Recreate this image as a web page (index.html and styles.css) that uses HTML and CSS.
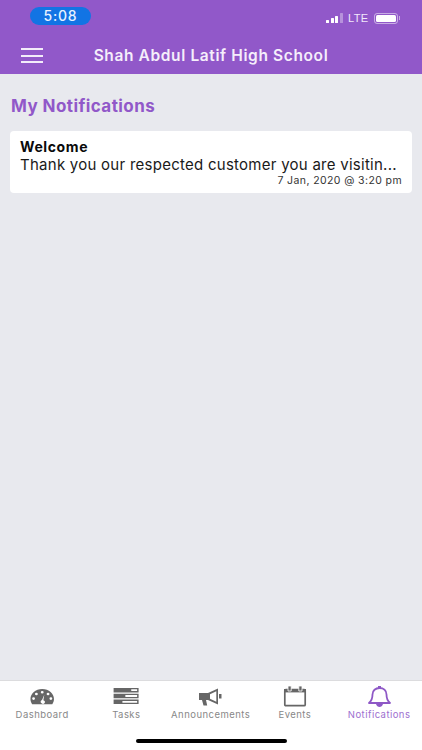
FILE: index.html
```html
<!DOCTYPE html>
<html lang="en">
<head>
<meta charset="utf-8">
<title>My Notifications</title>
<link rel="stylesheet" href="styles.css">
</head>
<body>
<div class="app">
  <header class="top">
    <div class="status">
      <span class="time">5:08</span>
      <div class="sys">
        <span class="signal"><i class="s1"></i><i class="s2"></i><i class="s3"></i><i class="s4"></i></span>
        <span class="lte">LTE</span>
        <span class="battery"><span class="fill"></span></span><span class="nub"></span>
      </div>
    </div>
    <div class="bar">
      <span class="burger"><i></i><i></i><i></i></span>
      <h1>Shah Abdul Latif High School</h1>
    </div>
  </header>
  <main class="content">
    <h2>My Notifications</h2>
    <article class="card">
      <div class="card-title">Welcome</div>
      <div class="card-body">Thank you our respected customer you are visitin...</div>
      <div class="card-date">7 Jan, 2020 @ 3:20 pm</div>
    </article>
  </main>
  <nav class="tabs">
    <div class="tab">
      <svg class="ico" width="26" height="21" viewBox="0 0 26 21"><g transform="translate(1 3) scale(.94 .87)"><path fill="#666" fill-rule="evenodd" d="M13 0C5.800 0 .5 5.400.5 11.500c0 2.400.7 4.400 1.800 6h21.400c1.100-1.600 1.800-3.600 1.800-6C25.500 5.400 20.200 0 13 0zM13 2.200a1.500 1.500 0 1 1 0 3 1.500 1.500 0 0 1 0-3zM6.800 4.200a1.500 1.500 0 1 1 0 3 1.500 1.500 0 0 1 0-3zM19.200 4.200a1.500 1.500 0 1 1 0 3 1.500 1.500 0 0 1 0-3zM3.800 9.500a1.500 1.500 0 1 1 0 3 1.500 1.500 0 0 1 0-3zM22.200 9.500a1.500 1.500 0 1 1 0 3 1.500 1.500 0 0 1 0-3zM15.200 6.500l-1 6.300a2.200 2.200 0 1 1-2.300 3.400 2.200 2.200 0 0 1 .9-3.600z"/></g></svg>
      <span>Dashboard</span>
    </div>
    <div class="tab">
      <svg class="ico" width="26" height="21" viewBox="0 0 26 21"><g transform="translate(.6 2) scale(.98 .89)"><path fill="#666" fill-rule="evenodd" d="M0 0h25.500v5H0zM18 1.500v2h6v-2zM0 6.500h25.500v5H0zM12 8v2h12V8zM0 13h25.500v5H0zM9 14.500v2h15v-2z"/></g></svg>
      <span>Tasks</span>
    </div>
    <div class="tab">
      <svg class="ico" width="26" height="21" viewBox="0 0 26 21"><g transform="translate(0 2)"><path fill="#666" d="M1 5h9v7H8l1.200 5.500H5.500L4 12H1z"/><path fill="#666" d="M10 5 20 .5v16L10 12z"/><path fill="#fff" d="M12 6.300 18.300 3.300v10.400L12 10.700z"/><path fill="#666" d="M21 6h2.500v4.500H21z"/></g></svg>
      <span>Announcements</span>
    </div>
    <div class="tab">
      <svg class="ico" width="24" height="21" viewBox="0 0 24 21"><rect x="1.800" y="3.500" width="20.400" height="16.200" rx="1" fill="none" stroke="#666" stroke-width="1.700"/><path fill="#666" d="M1 3h22v3.400H1z"/><path fill="#666" stroke="#fff" stroke-width=".8" d="M5 0h3.200v5H5zM15.800 0H19v5h-3.200z"/></svg>
      <span>Events</span>
    </div>
    <div class="tab active">
      <svg class="ico" width="23" height="21" viewBox="0 0 23 21"><path fill="none" stroke="#8e58c6" stroke-width="1.800" stroke-linejoin="round" d="M1 17c3-2.500 3.500-5 3.500-8.500C4.500 4.500 7.500 2 11.500 2s7 2.500 7 6.500c0 3.500.5 6 3.500 8.500z"/><path fill="#8e58c6" d="M10 0h3v2.500h-3zM8 18h7c-.5 2-2 3-3.500 3S8.500 20 8 18z"/></svg>
      <span>Notifications</span>
    </div>
  </nav>
  <div class="home"><span></span></div>
</div>
</body>
</html>
```
FILE: styles.css
```css
* { box-sizing: border-box; margin: 0; padding: 0; }
html, body { width: 422px; height: 750px; overflow: hidden; }
body { font-family: "Liberation Sans", Arial, sans-serif; background: #e8e9ee; }
.app { width: 422px; height: 750px; display: flex; flex-direction: column; }

.top { height: 74px; background: #9158c9; flex: none; color: #fff; }
.status { height: 36px; padding: 7px 22px 0 30px; display: flex; align-items: flex-start; justify-content: space-between; }
.time { width: 61px; height: 18px; border-radius: 9px; background: #1274e4; color: #e8f2ff; font-size: 14px; line-height: 18px; text-align: center; font-family: "Inter", sans-serif; font-weight: 500; letter-spacing: .8px; }
.sys { display: flex; align-items: center; height: 18px; margin-top: 2px; }
.signal { display: flex; align-items: flex-end; gap: 1.500px; height: 10px; margin-right: 5px; margin-left: -3px; }
.signal i { display: block; width: 3px; background: #fff; border-radius: .5px; }
.signal .s1 { height: 3px; } .signal .s2 { height: 5px; } .signal .s3 { height: 7.500px; }
.signal .s4 { height: 10px; background: rgba(255,255,255,.35); }
.lte { font-size: 11px; color: #f2e9fb; letter-spacing: .4px; margin-right: 5px; }
.battery { width: 24px; height: 11px; border: 1px solid rgba(255,255,255,.5); border-radius: 3px; padding: 1px; display: flex; }
.fill { flex: 1; background: #fff; border-radius: 1.500px; }
.nub { width: 1.500px; height: 4px; margin-left: 1px; background: rgba(255,255,255,.5); }

.bar { height: 38px; position: relative; display: flex; align-items: flex-start; justify-content: center; }
.burger { position: absolute; left: 21px; top: 12px; width: 22px; height: 15px; display: flex; flex-direction: column; justify-content: space-between; }
.burger i { display: block; height: 2px; background: #f3ecfa; }
h1 { font-family: "Inter", sans-serif; font-size: 15.500px; font-weight: 600; line-height: 20px; margin-top: 10px; color: #f5eefb; letter-spacing: .62px; }

.content { flex: 1; padding: 0 10px; }
h2 { font-family: "Inter", sans-serif; font-size: 17px; font-weight: 700; color: #9158c9; line-height: 22px; margin: 21px 0 14px 1px; letter-spacing: .42px; }
.card { background: #fff; border-radius: 4px; height: 62px; padding: 8px 10px 0; color: #111; font-family: "Inter", sans-serif; }
.card-title { font-size: 14px; font-weight: 700; line-height: 16px; color: #0a0a0a; letter-spacing: .6px; }
.card-body { font-size: 15px; line-height: 19px; color: #1a1a1a; white-space: nowrap; letter-spacing: .26px; }
.card-date { font-size: 10.500px; line-height: 13px; text-align: right; color: #333; letter-spacing: .4px; }

.tabs { height: 44px; flex: none; background: #fff; display: flex; border-top: 1px solid #dcdcde; }
.tab { flex: 0 0 84.250px; display: flex; flex-direction: column; align-items: center; justify-content: flex-start; color: #888; font-family: "Inter", sans-serif; font-size: 9.500px; letter-spacing: .45px; }
.tab .ico { height: 21px; margin-top: 5px; flex: none; }
.tab span { line-height: 12px; margin-top: 2px; white-space: nowrap; }
.tab.active { color: #9d6fd0; }
.home { height: 26px; background: #fff; flex: none; display: flex; justify-content: center; padding-top: 15px; }
.home span { display: block; width: 151px; height: 4px; border-radius: 2px; background: #000; }
```
